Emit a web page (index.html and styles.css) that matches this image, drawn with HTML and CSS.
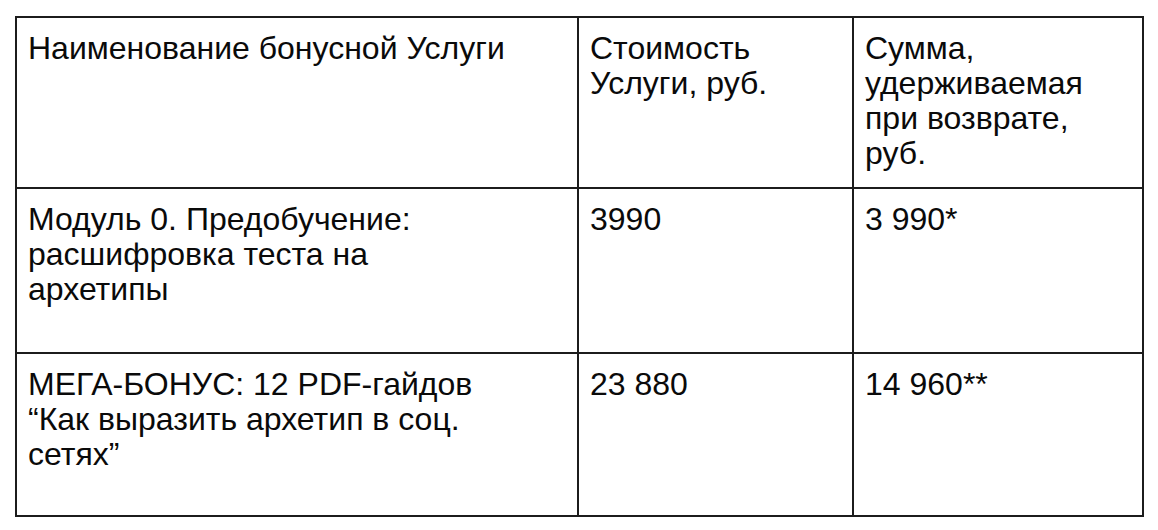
FILE: index.html
```html
<!DOCTYPE html>
<html lang="ru">
<head>
<meta charset="utf-8">
<title>Бонусные услуги</title>
<link rel="stylesheet" href="styles.css">
</head>
<body>
<table class="bonus-table">
  <colgroup>
    <col class="col-name">
    <col class="col-price">
    <col class="col-hold">
  </colgroup>
  <tr class="row-head">
    <td>Наименование бонусной Услуги</td>
    <td>Стоимость<br>Услуги, руб.</td>
    <td>Сумма,<br>удерживаемая<br>при возврате,<br>руб.</td>
  </tr>
  <tr class="row-one">
    <td>Модуль 0. Предобучение:<br>расшифровка теста на<br>архетипы</td>
    <td>3990</td>
    <td>3 990*</td>
  </tr>
  <tr class="row-two">
    <td>МЕГА-БОНУС: 12 PDF-гайдов<br>“Как выразить архетип в соц.<br>сетях”</td>
    <td>23 880</td>
    <td>14 960**</td>
  </tr>
</table>
</body>
</html>
```
FILE: styles.css
```css
html, body {
  margin: 0;
  padding: 0;
  background: #ffffff;
}
body {
  padding: 16px 0 0 15px;
  font-family: "Liberation Sans", Arial, sans-serif;
  color: #0a0a0a;
}
.bonus-table {
  border-collapse: collapse;
  table-layout: fixed;
  width: 1127px;
}
.col-name { width: 562px; }
.col-price { width: 275px; }
.col-hold { width: 290px; }
.bonus-table td {
  border: 2px solid #1c1c1c;
  vertical-align: top;
  padding: 13px 11px 0 11px;
  font-size: 32px;
  line-height: 35px;
}
.row-head { height: 171px; }
.row-one { height: 165px; }
.row-two { height: 163px; }
```
